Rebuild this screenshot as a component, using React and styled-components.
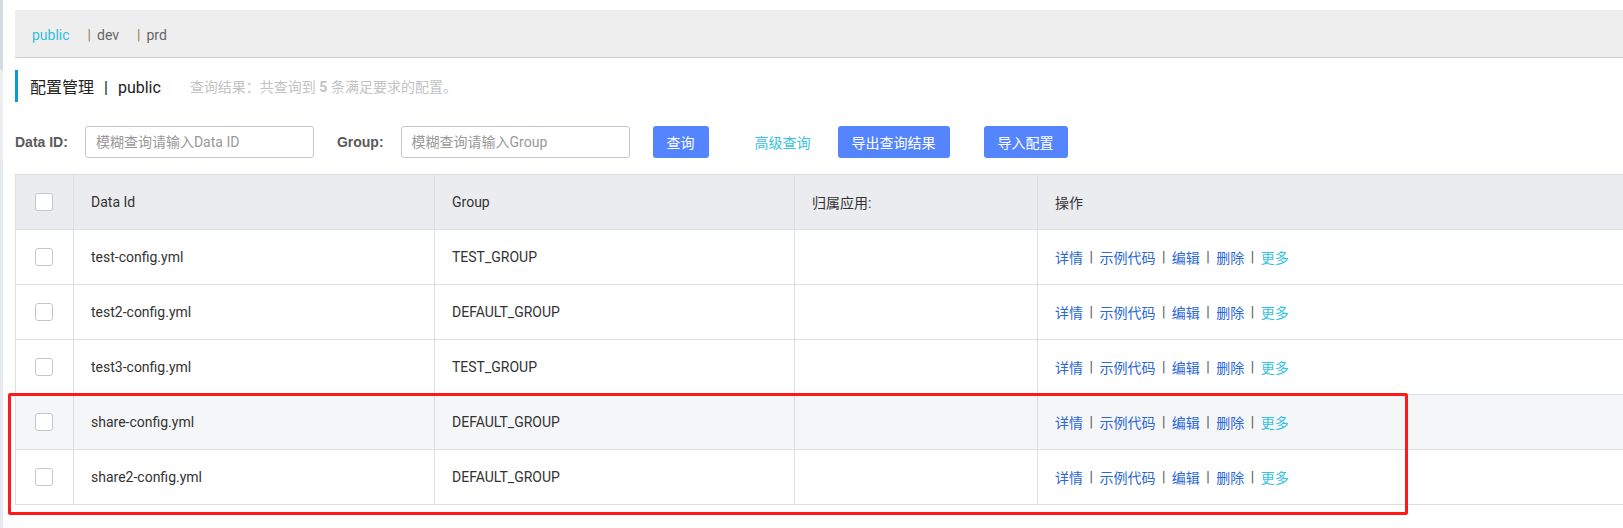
import React from 'react';
import styled, { createGlobalStyle } from 'styled-components';

const GlobalStyle = createGlobalStyle`
  html, body { margin: 0; padding: 0; background: #fff; }
  body {
    font-family: Roboto, "Noto Sans CJK SC", sans-serif;
    font-size: 14px;
    color: #333;
    overflow: hidden;
  }
  *, *::before, *::after { box-sizing: border-box; }
`;

const Page = styled.div`
  position: relative;
  display: flex;
  width: 1623px;
  height: 528px;
  overflow: hidden;
`;

const SideEdge = styled.div`
  flex: 0 0 3px;
  background: linear-gradient(
    to bottom,
    #d6dbe1 0,
    #d6dbe1 70px,
    #eceef1 70px,
    #eceef1 160px,
    #e6e9ed 160px
  );
`;

const Main = styled.main`
  flex: 1;
  min-width: 0;
  padding: 10px 0 0 12px;
`;

const TabBar = styled.div`
  display: flex;
  align-items: center;
  gap: 18px;
  height: 48px;
  padding: 3px 0 0 17px;
  background: #eee;
  border-bottom: 1px solid #ccc;
`;

const Tab = styled.span`
  font-size: 14px;
  color: ${(p) => (p.$active ? '#33bde0' : '#666')};
  cursor: pointer;
`;

const TabSep = styled.span`
  margin-right: 6px;
  color: #a07a4e;
`;

const TitleRow = styled.div`
  display: flex;
  align-items: center;
  margin-top: 12px;
  height: 32px;
  border-left: 3px solid #0a9bd0;
  padding-left: 12px;
`;

const Title = styled.span`
  font-size: 16px;
  color: #222;
`;

const TitleSep = styled.span`
  margin: 0 10px;
`;

const Summary = styled.span`
  margin-left: 29px;
  font-size: 14px;
  color: #c3c3c3;
  strong { font-weight: bold; }
`;

const FilterRow = styled.div`
  display: flex;
  align-items: center;
  margin-top: 24px;
  height: 32px;
`;

const Field = styled.div`
  display: flex;
  align-items: center;
  margin-right: 23px;
`;

const Label = styled.label`
  font-family: "Liberation Sans", Arial, sans-serif;
  font-weight: bold;
  font-size: 14px;
  color: #5a5a5a;
  margin-right: 17px;
`;

const Input = styled.input`
  width: 229px;
  height: 32px;
  border: 1px solid #c4c6cf;
  border-radius: 3px;
  padding: 0 10px;
  font-family: inherit;
  font-size: 14px;
  color: #333;
  outline: none;
  &::placeholder { color: #999; }
`;

const Button = styled.button`
  height: 32px;
  padding: 0 14px;
  margin-left: ${(p) => p.$ml || 0}px;
  border: none;
  border-radius: 3px;
  background: #5584ff;
  color: #fff;
  font-family: inherit;
  font-size: 14px;
  cursor: pointer;
`;

const TextButton = styled.button`
  height: 32px;
  padding: 0;
  margin-left: ${(p) => p.$ml || 0}px;
  border: none;
  background: none;
  color: #36c1e0;
  font-family: inherit;
  font-size: 14px;
  cursor: pointer;
`;

const Table = styled.div`
  margin-top: 16px;
  border-top: 1px solid #dcdee3;
  border-left: 1px solid #dcdee3;
`;

const Row = styled.div`
  display: grid;
  grid-template-columns: 57px 361px 360px 243px 1fr;
  height: 55px;
  border-bottom: 1px solid #dcdee3;
  background: ${(p) => (p.$header ? '#ebecf0' : p.$highlight ? '#f5f6f8' : '#fff')};
`;

const Cell = styled.div`
  display: flex;
  align-items: center;
  padding-left: 17px;
  font-size: 14px;
  color: #333;
  white-space: nowrap;
  & + & { border-left: 1px solid #dcdee3; }
`;

const CheckCell = styled(Cell)`
  justify-content: center;
  padding-left: 0;
  padding-right: 2px;
`;

const Checkbox = styled.span`
  display: inline-block;
  width: 18px;
  height: 18px;
  border: 1px solid #c4c6cf;
  border-radius: 3px;
  background: #fff;
`;

const Link = styled.a`
  color: ${(p) => (p.$more ? '#36c1e0' : '#2b67d6')};
  text-decoration: none;
  cursor: pointer;
`;

const ActionSep = styled.span`
  margin: 0 6.5px;
  color: #555;
`;

const Annotation = styled.div`
  position: absolute;
  left: 8px;
  top: 393px;
  width: 1400px;
  height: 122px;
  border: 3px solid #ff1a1a;
  border-radius: 2px;
  pointer-events: none;
`;

const rows = [
  { id: 'test-config.yml', group: 'TEST_GROUP' },
  { id: 'test2-config.yml', group: 'DEFAULT_GROUP' },
  { id: 'test3-config.yml', group: 'TEST_GROUP' },
  { id: 'share-config.yml', group: 'DEFAULT_GROUP', highlight: true },
  { id: 'share2-config.yml', group: 'DEFAULT_GROUP' },
];

const actions = ['详情', '示例代码', '编辑', '删除'];

export default function App() {
  return (
    <>
      <GlobalStyle />
      <Page>
        <SideEdge />
        <Main>
          <TabBar>
            <Tab $active>public</Tab>
            <Tab><TabSep>|</TabSep>dev</Tab>
            <Tab><TabSep>|</TabSep>prd</Tab>
          </TabBar>

          <TitleRow>
            <Title>配置管理<TitleSep>|</TitleSep>public</Title>
            <Summary>查询结果：共查询到 <strong>5</strong> 条满足要求的配置。</Summary>
          </TitleRow>

          <FilterRow>
            <Field>
              <Label>Data ID:</Label>
              <Input placeholder="模糊查询请输入Data ID" />
            </Field>
            <Field>
              <Label>Group:</Label>
              <Input placeholder="模糊查询请输入Group" />
            </Field>
            <Button>查询</Button>
            <TextButton $ml={46}>高级查询</TextButton>
            <Button $ml={27}>导出查询结果</Button>
            <Button $ml={34}>导入配置</Button>
          </FilterRow>

          <Table>
            <Row $header>
              <CheckCell><Checkbox /></CheckCell>
              <Cell>Data Id</Cell>
              <Cell>Group</Cell>
              <Cell>归属应用:</Cell>
              <Cell>操作</Cell>
            </Row>
            {rows.map((r) => (
              <Row key={r.id} $highlight={r.highlight}>
                <CheckCell><Checkbox /></CheckCell>
                <Cell>{r.id}</Cell>
                <Cell>{r.group}</Cell>
                <Cell />
                <Cell>
                  {actions.map((a) => (
                    <React.Fragment key={a}>
                      <Link>{a}</Link>
                      <ActionSep>|</ActionSep>
                    </React.Fragment>
                  ))}
                  <Link $more>更多</Link>
                </Cell>
              </Row>
            ))}
          </Table>
        </Main>
        <Annotation />
      </Page>
    </>
  );
}
